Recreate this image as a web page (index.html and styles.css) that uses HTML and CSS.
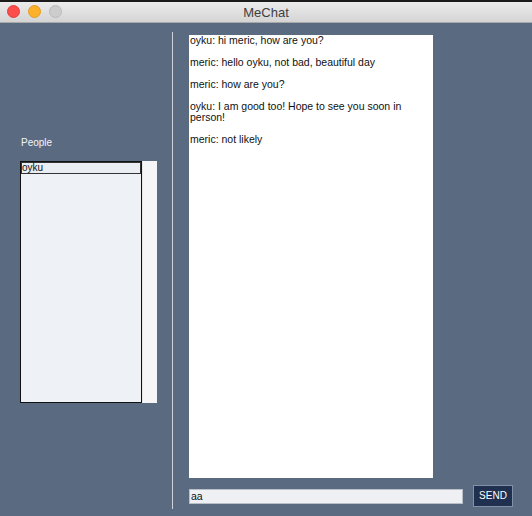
FILE: index.html
```html
<!DOCTYPE html>
<html>
<head>
<meta charset="utf-8">
<title>MeChat</title>
<link rel="stylesheet" href="styles.css">
</head>
<body>
<div class="window">
  <div class="titlebar">
    <div class="lights">
      <span class="light red"></span>
      <span class="light yellow"></span>
      <span class="light grey"></span>
    </div>
    <div class="title">MeChat</div>
  </div>
  <div class="content">
    <div class="left">
      <div class="label">People</div>
      <div class="listwrap">
        <div class="list">
          <div class="item selected">oyku</div>
        </div>
        <div class="scroll"></div>
      </div>
    </div>
    <div class="divider"></div>
    <div class="right">
      <div class="chat">
        <p>oyku: hi meric, how are you?</p>
        <p>meric: hello oyku, not bad, beautiful day</p>
        <p>meric: how are you?</p>
        <p>oyku: I am good too! Hope to see you soon in person!</p>
        <p>meric: not likely</p>
      </div>
      <div class="inputrow">
        <div class="input">aa</div>
        <div class="send">SEND</div>
      </div>
    </div>
  </div>
</div>
</body>
</html>
```

FILE: styles.css
```css
html, body {
  margin: 0;
  padding: 0;
  width: 532px;
  height: 516px;
  overflow: hidden;
  background: #5a6a81;
  font-family: "Liberation Sans", Arial, sans-serif;
}

.window {
  width: 532px;
  height: 516px;
  display: flex;
  flex-direction: column;
}

.titlebar {
  height: 20px;
  border-top: 2px solid #1c1c1c;
  border-bottom: 1px solid #a9a9a9;
  background: linear-gradient(#ececec, #d4d4d4);
  position: relative;
  display: flex;
  align-items: center;
  justify-content: center;
}

.lights {
  position: absolute;
  left: 7px;
  top: 3px;
  display: flex;
  gap: 8px;
}

.light {
  width: 13px;
  height: 13px;
  border-radius: 50%;
  box-sizing: border-box;
}

.red { background: #fc4c4c; border: 1px solid #e0403e; }
.yellow { background: #fdb12a; border: 1px solid #e09e22; }
.grey { background: #cdcdcd; border: 1px solid #bababa; }

.title {
  font-size: 13px;
  color: #3e3e3e;
}

.content {
  flex: 1;
  display: flex;
}

.left {
  width: 152px;
  padding-left: 20px;
  padding-top: 114px;
}

.label {
  font-size: 10px;
  line-height: 12px;
  color: #f2f4f7;
  margin-left: 1px;
  margin-bottom: 12px;
}

.listwrap {
  display: flex;
  height: 242px;
}

.list {
  width: 120px;
  border: 1px solid #111;
  background: #eef1f5;
}

.item {
  height: 10px;
  border: 1px solid #333;
  font-size: 10px;
  line-height: 10px;
  color: #111;
  background: #eaedf2;
}

.scroll {
  width: 15px;
  background: #f6f6f6;
  box-shadow: inset 1px 0 0 #e6e6e6;
}

.divider {
  width: 1px;
  margin-top: 9px;
  margin-bottom: 7px;
  background: #cfd3d9;
}

.right {
  padding-left: 16px;
  padding-top: 12px;
  display: flex;
  flex-direction: column;
}

.chat {
  width: 243px;
  height: 443px;
  background: #ffffff;
  padding: 0 0 0 1px;
  font-size: 10.5px;
  line-height: 11px;
  color: #111;
}

.chat p {
  margin: 0 0 11px 0;
}

.inputrow {
  display: flex;
  align-items: center;
  gap: 10px;
  margin-top: 7px;
}

.input {
  width: 271px;
  height: 13px;
  border: 1px solid #b9bfc8;
  background: #eef0f4;
  font-size: 10.5px;
  line-height: 13px;
  padding-left: 1px;
  color: #111;
}

.send {
  width: 38px;
  height: 20px;
  border: 1px solid #8391a6;
  background: #1f3050;
  color: #ffffff;
  font-size: 10px;
  line-height: 20px;
  text-align: center;
}
```
